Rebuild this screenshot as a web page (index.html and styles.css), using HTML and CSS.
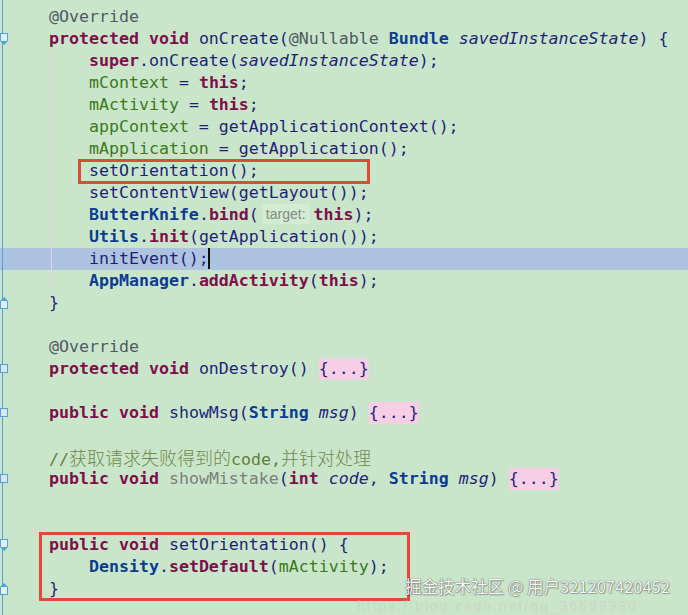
FILE: index.html
```html
<!DOCTYPE html>
<html lang="zh">
<head>
<meta charset="utf-8">
<title>Editor</title>
<link rel="stylesheet" href="styles.css">
</head>
<body>
<div class="editor">
  <div class="gutter-line"></div>
  <div class="indent-guide"></div>

  <div class="line"><div class="gut"></div><div class="code"><span class="an">@Override</span></div></div>
  <div class="line"><div class="gut"><span class="mk mk-open"></span></div><div class="code"><span class="kw">protected</span> <span class="kw">void</span> onCreate(<span class="an">@Nullable</span> <span class="cl">Bundle</span> <span class="it">savedInstanceState</span>) {</div></div>
  <div class="line"><div class="gut"></div><div class="code">    <span class="kw">super</span>.onCreate(<span class="it">savedInstanceState</span>);</div></div>
  <div class="line"><div class="gut"></div><div class="code">    <span class="fd">mContext</span> = <span class="kw">this</span>;</div></div>
  <div class="line"><div class="gut"></div><div class="code">    <span class="fd">mActivity</span> = <span class="kw">this</span>;</div></div>
  <div class="line"><div class="gut"></div><div class="code">    <span class="fd">appContext</span> = getApplicationContext();</div></div>
  <div class="line"><div class="gut"></div><div class="code">    <span class="fd">mApplication</span> = getApplication();</div></div>
  <div class="line"><div class="gut"></div><div class="code">    setOrientation();</div></div>
  <div class="line"><div class="gut"></div><div class="code">    setContentView(getLayout());</div></div>
  <div class="line"><div class="gut"></div><div class="code">    <span class="cl">ButterKnife</span>.<span class="kw">bind</span>(<span class="hint">target:</span><span class="kw">this</span>);</div></div>
  <div class="line"><div class="gut"></div><div class="code">    <span class="cl">Utils</span>.<span class="kw">init</span>(getApplication());</div></div>
  <div class="line current"><div class="gut"></div><div class="code">    initEvent();<span class="caret"></span></div></div>
  <div class="line"><div class="gut"></div><div class="code">    <span class="cl">AppManager</span>.<span class="kw">addActivity</span>(<span class="kw">this</span>);</div></div>
  <div class="line"><div class="gut"><span class="mk mk-close"></span></div><div class="code">}</div></div>
  <div class="line"><div class="gut"></div><div class="code"></div></div>
  <div class="line"><div class="gut"></div><div class="code"><span class="an">@Override</span></div></div>
  <div class="line"><div class="gut"><span class="mk mk-fold"></span></div><div class="code"><span class="kw">protected</span> <span class="kw">void</span> onDestroy() <span class="folded">{...}</span></div></div>
  <div class="line"><div class="gut"></div><div class="code"></div></div>
  <div class="line"><div class="gut"><span class="mk mk-fold"></span></div><div class="code"><span class="kw">public</span> <span class="kw">void</span> showMsg(<span class="cl">String</span> <span class="it">msg</span>) <span class="folded">{...}</span></div></div>
  <div class="line"><div class="gut"></div><div class="code"></div></div>
  <div class="line"><div class="gut"></div><div class="code"><span class="cm">//<span class="cjk">获取请求失败得到的</span>code,<span class="cjk">并针对处理</span></span></div></div>
  <div class="line"><div class="gut"><span class="mk mk-fold"></span></div><div class="code"><span class="kw">public</span> <span class="kw">void</span> <span class="un">showMistake</span>(<span class="kw">int</span> <span class="it">code</span>, <span class="cl">String</span> <span class="it">msg</span>) <span class="folded">{...}</span></div></div>
  <div class="line"><div class="gut"></div><div class="code"></div></div>
  <div class="line"><div class="gut"></div><div class="code"></div></div>
  <div class="line"><div class="gut"><span class="mk mk-open"></span></div><div class="code"><span class="kw">public</span> <span class="kw">void</span> setOrientation() {</div></div>
  <div class="line"><div class="gut"></div><div class="code">    <span class="cl">Density</span>.<span class="kw">setDefault</span>(<span class="fd">mActivity</span>);</div></div>
  <div class="line"><div class="gut"><span class="mk mk-close"></span></div><div class="code">}</div></div>

  <div class="mark mark-one"></div>
  <div class="mark mark-two"></div>

  <div class="url-mark">https://blog.csdn.net/qq_36699930</div>
  <div class="watermark">掘金技术社区 @ 用户321207420452</div>
</div>
</body>
</html>
```

FILE: styles.css
```css
html, body {
  margin: 0;
  padding: 0;
  background: #cae6ca;
}

.editor {
  position: relative;
  width: 688px;
  height: 615px;
  overflow: hidden;
  background: #cae6ca;
  padding-top: 6px;
  box-sizing: border-box;
  font-family: "DejaVu Sans Mono", "Liberation Mono", monospace;
  font-size: 16.6px;
  color: #1f1f78;
}

.gutter-line {
  position: absolute;
  left: 2px;
  top: 0;
  width: 1px;
  height: 615px;
  background: #4da3dc;
  z-index: 2;
}

.indent-guide {
  position: absolute;
  left: 51px;
  top: 49px;
  width: 1px;
  height: 242px;
  background: #e2d4e2;
  z-index: 1;
}

.line {
  display: flex;
  height: 22px;
  line-height: 22px;
}

.line.current {
  background: #adc3df;
}

.gut {
  position: relative;
  width: 49px;
  flex: none;
}

.code {
  position: relative;
  z-index: 2;
  white-space: pre;
}

.mk {
  position: absolute;
  left: 0;
  z-index: 3;
  width: 8px;
  box-sizing: border-box;
  border: 1px solid #4da3dc;
  background: #dde6ee;
}

.mk-fold {
  top: 6px;
  height: 9px;
}

.mk-open {
  top: 5px;
  height: 8px;
  border-bottom: none;
  background: #e6eef2;
}
.mk-open::after {
  content: "";
  position: absolute;
  left: -1px;
  top: 7px;
  width: 0;
  height: 0;
  border-left: 4px solid transparent;
  border-right: 4px solid transparent;
  border-top: 4px solid #4da3dc;
}

.mk-close {
  top: 9px;
  height: 8px;
  border-top: none;
  background: #e6eef2;
}
.mk-close::after {
  content: "";
  position: absolute;
  left: -1px;
  top: -4px;
  width: 0;
  height: 0;
  border-left: 4px solid transparent;
  border-right: 4px solid transparent;
  border-bottom: 4px solid #4da3dc;
}

.kw {
  color: #7d0f4c;
  font-weight: bold;
}

.an {
  color: #4e5a66;
}

.cl {
  color: #0d3b93;
  font-weight: bold;
}

.it {
  font-style: italic;
  color: #1f1f78;
}

.fd {
  color: #3b7a1a;
}

.un {
  color: #7a7f7a;
}

.cm {
  color: #5f7f3c;
}

.cjk {
  font-family: "Noto Sans CJK SC", sans-serif;
  font-size: 18px;
  font-weight: 300;
  color: #6f8a4e;
}

.folded {
  background: #f6cfe6;
  padding: 1px 0 2px;
}

.hint {
  display: inline-block;
  margin: 0 4px 0 3px;
  padding: 0 4px;
  height: 20px;
  line-height: 20px;
  vertical-align: 1px;
  border-radius: 3px;
  background: #d3ead3;
  color: #858c85;
  font-family: "Liberation Sans", Arial, sans-serif;
  font-size: 14px;
}

.caret {
  display: inline-block;
  width: 2px;
  height: 21px;
  margin-left: -1px;
  vertical-align: top;
  background: #111;
}

.mark {
  position: absolute;
  border: 3px solid #e04a38;
  box-sizing: border-box;
  z-index: 4;
}

.mark-one {
  left: 78px;
  top: 159px;
  width: 292px;
  height: 25px;
}

.mark-two {
  left: 39px;
  top: 532px;
  width: 371px;
  height: 69px;
}

.url-mark {
  position: absolute;
  left: 357px;
  top: 598px;
  z-index: 5;
  font-family: "Liberation Sans", Arial, sans-serif;
  font-size: 14px;
  line-height: 16px;
  letter-spacing: 2px;
  color: rgba(200, 205, 200, 0.6);
}

.watermark {
  position: absolute;
  left: 405px;
  top: 576px;
  z-index: 6;
  font-family: "Noto Sans CJK SC", sans-serif;
  font-size: 16.5px;
  line-height: 21px;
  color: #f4f6f4;
  text-shadow: 0 0 1px #6a6a6a, 0 0 1px #6a6a6a, 1px 1px 1px rgba(0,0,0,0.25);
}
```
